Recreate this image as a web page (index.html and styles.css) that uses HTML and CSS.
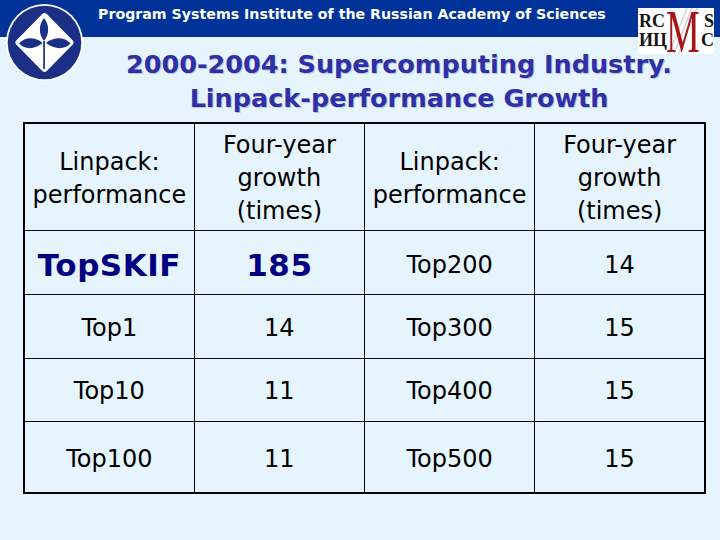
FILE: index.html
```html
<!DOCTYPE html>
<html>
<head>
<meta charset="utf-8">
<link rel="stylesheet" href="styles.css">
</head>
<body>
<div class="slide">
  <header class="topbar">
    <div class="bar-title">Program Systems Institute of the Russian Academy of Sciences</div>
    <div class="rcms">
      <svg class="rcms-lines" width="76" height="46" viewBox="0 0 76 46">
        <path d="M31 46 L49 0 M36 46 L54 0 M41 46 L59 0" stroke="#d4d4d4" stroke-width="1.4"/>
      </svg>
      <div class="rcms-col left"><span>RC</span><span>ИЦ</span></div>
      <svg class="rcms-m" width="35" height="46" viewBox="0 0 35 46">
        <text class="m" x="0" y="26.6" transform="scale(1 1.64)">M</text>
      </svg>
      <div class="rcms-col right"><span>S</span><span>C</span></div>
    </div>
  </header>
  <svg class="logo" width="88" height="86" viewBox="0 0 88 86">
    <circle cx="44.5" cy="42.5" r="38.5" fill="#ffffff"/>
    <circle cx="44.5" cy="42.5" r="36.8" fill="#1b2f86"/>
    <path d="M44.5 13 Q45.8 13 47 14.2 L73 40.8 Q74.5 42.5 73 44.2 L47 70.8 Q44.5 73.2 42 70.8 L16 44.2 Q14.5 42.5 16 40.8 L42 14.2 Q43.2 13 44.5 13 Z" fill="#ffffff"/>
    <path d="M44 18 C38.5 25 38.5 34 44 41 C49.5 34 49.5 25 44 18 Z" fill="#1b2f86"/>
    <path d="M19 43.5 C25 37 35 36.5 42.5 43 C35 49.5 25 50 19 43.5 Z" fill="#1b2f86"/>
    <path d="M70.5 43.5 C64.5 37 54.5 36.5 46 43 C54.5 49.5 64.5 50 70.5 43.5 Z" fill="#1b2f86"/>
    <rect x="43.2" y="41" width="1.7" height="28" fill="#1b2f86"/>
  </svg>
  <h1 class="title">2000-2004: Supercomputing Industry.<br>Linpack-performance Growth</h1>
  <table class="grid">
    <tr class="head">
      <td>Linpack:<br>performance</td>
      <td>Four-year<br>growth<br>(times)</td>
      <td>Linpack:<br>performance</td>
      <td>Four-year<br>growth<br>(times)</td>
    </tr>
    <tr class="r1">
      <td class="em">TopSKIF</td>
      <td class="em">185</td>
      <td>Top200</td>
      <td>14</td>
    </tr>
    <tr class="r2">
      <td>Top1</td>
      <td>14</td>
      <td>Top300</td>
      <td>15</td>
    </tr>
    <tr class="r3">
      <td>Top10</td>
      <td>11</td>
      <td>Top400</td>
      <td>15</td>
    </tr>
    <tr class="r4">
      <td>Top100</td>
      <td>11</td>
      <td>Top500</td>
      <td>15</td>
    </tr>
  </table>
</div>
</body>
</html>
```
FILE: styles.css
```css
html, body {
  margin: 0;
  padding: 0;
}
body {
  background: #e6f4fd;
  font-family: "DejaVu Sans", sans-serif;
}
.slide {
  position: relative;
  width: 720px;
  height: 540px;
  overflow: hidden;
  background: #e6f4fd;
}
.topbar {
  position: relative;
  height: 37px;
  background: #003399;
  display: flex;
  align-items: flex-start;
}
.bar-title {
  margin-left: 98px;
  margin-top: 5px;
  color: #ffffff;
  font-family: "DejaVu Sans", sans-serif;
  font-weight: bold;
  font-size: 14.2px;
  line-height: 18px;
  white-space: nowrap;
}
.logo {
  position: absolute;
  left: 0;
  top: 0;
}
.rcms {
  position: absolute;
  left: 638px;
  top: 8px;
  width: 76px;
  height: 46px;
  background: #ffffff;
  display: flex;
  font-family: "Liberation Serif", serif;
  color: #151515;
}
.rcms-lines {
  position: absolute;
  left: 0;
  top: 0;
}
.rcms-col {
  position: relative;
  display: flex;
  flex-direction: column;
  justify-content: center;
  font-size: 18px;
  font-weight: bold;
  line-height: 19px;
}
.rcms-col.left {
  width: 27px;
  padding-left: 1px;
}
.rcms-col.right {
  width: 13px;
  align-items: flex-end;
}
.rcms-m {
  position: relative;
  flex: none;
  overflow: visible;
}
.rcms .m {
  font-family: "Liberation Serif", serif;
  font-size: 38px;
  fill: #a8141c;
}
.title {
  margin: 10px 0 0 0;
  padding-left: 78px;
  text-align: center;
  font-family: "DejaVu Sans", sans-serif;
  font-weight: bold;
  font-size: 25.5px;
  line-height: 34px;
  color: #2f2fa6;
  text-shadow: 1px 1px 0 #b8c6dc;
}
.grid {
  margin: 7px 0 0 23px;
  width: 683px;
  border-collapse: collapse;
  border: 2px solid #000;
  table-layout: fixed;
}
.grid td {
  border: 1px solid #000;
  text-align: center;
  font-size: 24px;
  line-height: 33px;
  color: #000;
  padding: 3px 0 0 0;
}
.grid .head td { height: 103px; line-height: 33px; }
.grid .r1 td { padding-top: 6px; height: 57px; }
.grid .r2 td { height: 60px; }
.grid .r3 td { padding-top: 2px; height: 60px; }
.grid .r4 td { padding-top: 4px; height: 66px; }
.grid td.em {
  color: #000080;
  font-weight: bold;
  font-size: 31px;
  letter-spacing: 0.5px;
}
```
